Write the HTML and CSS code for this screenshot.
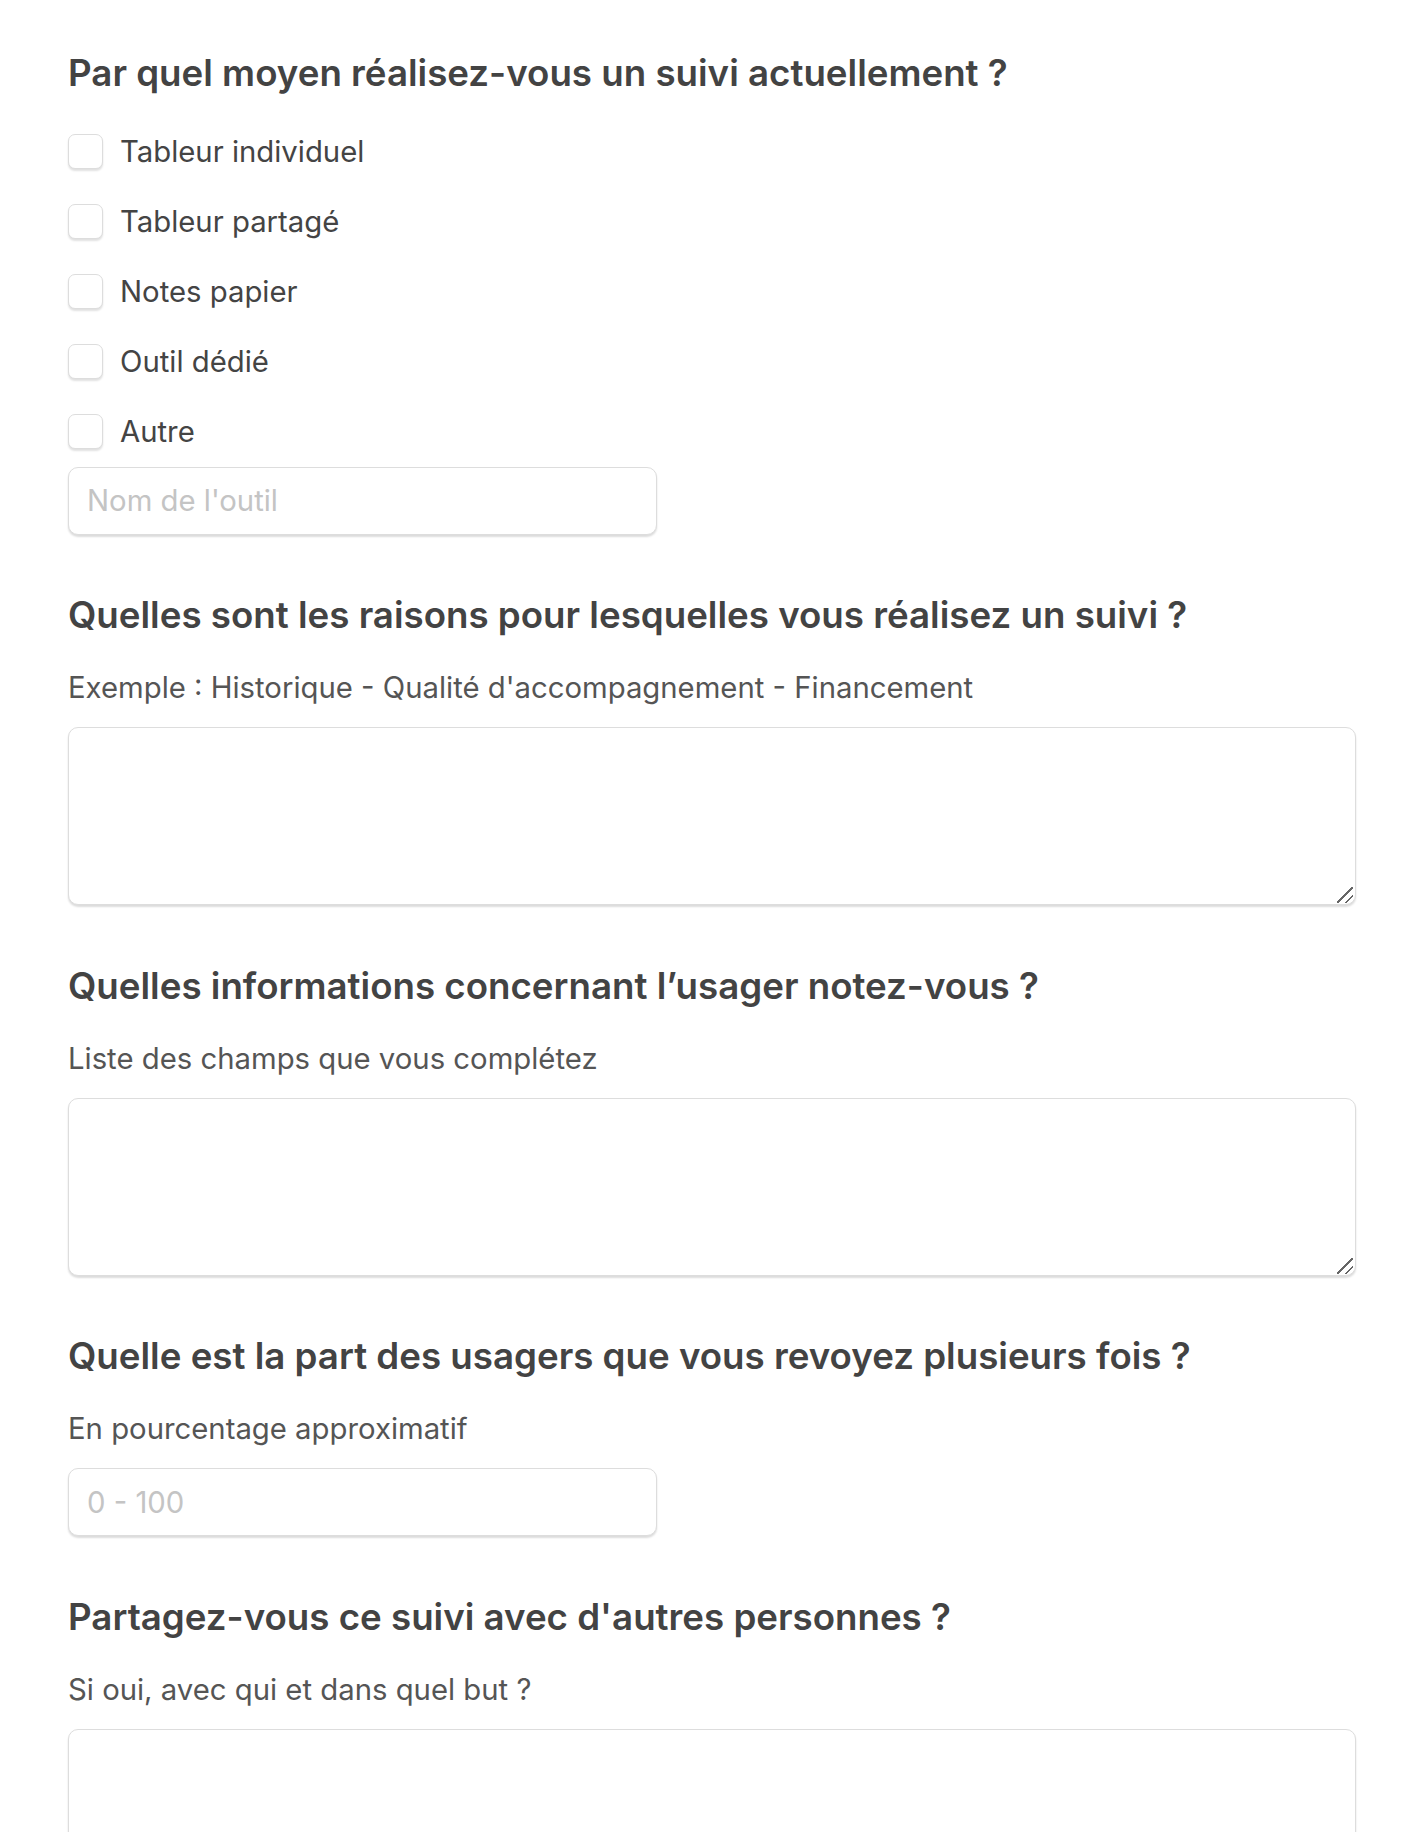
FILE: index.html
```html
<!DOCTYPE html>
<html lang="fr">
  <head>
    <meta charset="utf-8" />
    <title>Questionnaire suivi</title>
    <link rel="stylesheet" href="styles.css">
  </head>
  <body>
    <form class="survey">
      <section class="question">
        <h2>Par quel moyen réalisez-vous un suivi actuellement ?</h2>
        <div class="choices">
          <label class="choice"><input type="checkbox" name="moyen" value="tableur-individuel" /> Tableur individuel</label>
          <label class="choice"><input type="checkbox" name="moyen" value="tableur-partage" /> Tableur partagé</label>
          <label class="choice"><input type="checkbox" name="moyen" value="notes-papier" /> Notes papier</label>
          <label class="choice"><input type="checkbox" name="moyen" value="outil-dedie" /> Outil dédié</label>
          <label class="choice"><input type="checkbox" name="moyen" value="autre" /> Autre</label>
        </div>
        <input class="field field-short" type="text" placeholder="Nom de l'outil" />
      </section>

      <section class="question">
        <h2>Quelles sont les raisons pour lesquelles vous réalisez un suivi ?</h2>
        <p class="hint">Exemple : Historique - Qualité d'accompagnement - Financement</p>
        <div class="area-wrap">
          <textarea class="field field-area"></textarea>
        </div>
      </section>

      <section class="question">
        <h2>Quelles informations concernant l’usager notez-vous ?</h2>
        <p class="hint">Liste des champs que vous complétez</p>
        <div class="area-wrap">
          <textarea class="field field-area"></textarea>
        </div>
      </section>

      <section class="question">
        <h2>Quelle est la part des usagers que vous revoyez plusieurs fois ?</h2>
        <p class="hint">En pourcentage approximatif</p>
        <input class="field field-short" type="text" placeholder="0 - 100" />
      </section>

      <section class="question">
        <h2>Partagez-vous ce suivi avec d'autres personnes ?</h2>
        <p class="hint">Si oui, avec qui et dans quel but ?</p>
        <div class="area-wrap">
          <textarea class="field field-area"></textarea>
        </div>
      </section>
    </form>
  </body>
</html>
```

FILE: styles.css
```css
* {
  box-sizing: border-box;
}

body {
  margin: 0;
  font-family: "Inter", "Liberation Sans", sans-serif;
  color: #444;
  background: #fff;
}

.survey {
  width: 1288px;
  margin-left: 68px;
  padding-top: 51px;
}

.question {
  display: flex;
  flex-direction: column;
  align-items: flex-start;
  margin-bottom: 58.5px;
}

.question h2 {
  margin: 0;
  font-size: 36.7px;
  font-weight: 600;
  line-height: 44px;
  color: #434343;
}

.hint {
  margin: 33px 0 0;
  font-size: 29.3px;
  line-height: 36px;
  color: #555;
}

.choices {
  display: flex;
  flex-direction: column;
  gap: 35px;
  margin-top: 38.5px;
}

.choice {
  display: flex;
  align-items: center;
  gap: 17px;
  font-size: 29.3px;
  line-height: 35px;
  color: #444;
}

.choice input {
  appearance: none;
  -webkit-appearance: none;
  margin: 0;
  width: 35px;
  height: 35px;
  border: 1.5px solid #ddd;
  border-radius: 7px;
  background: #fff;
  box-shadow: 0 2px 2px rgba(0, 0, 0, 0.12);
}

.field {
  display: block;
  font-family: inherit;
  font-size: 29.3px;
  color: #444;
  background: #fff;
  border: 1.5px solid #ddd;
  border-radius: 10px;
  box-shadow: 0 2px 2px rgba(0, 0, 0, 0.14);
  outline: none;
}

.field::placeholder {
  color: #c4c4c4;
}

.field-short {
  width: 589px;
  height: 68px;
  padding: 0 18px;
}

.choices + .field-short {
  margin-top: 18px;
}

.hint + .field-short,
.hint + .area-wrap {
  margin-top: 21px;
}

.area-wrap {
  position: relative;
  width: 100%;
}

.field-area {
  width: 100%;
  height: 178px;
  padding: 14px 18px;
  resize: none;
}

/* resize grip in the bottom right corner */
.area-wrap::after {
  content: "";
  position: absolute;
  right: 3px;
  bottom: 2px;
  width: 16px;
  height: 16px;
  pointer-events: none;
  background: linear-gradient(
    135deg,
    transparent 45%,
    #666 45%,
    #666 54%,
    transparent 54%,
    transparent 72%,
    #666 72%,
    #666 81%,
    transparent 81%
  );
}
```
